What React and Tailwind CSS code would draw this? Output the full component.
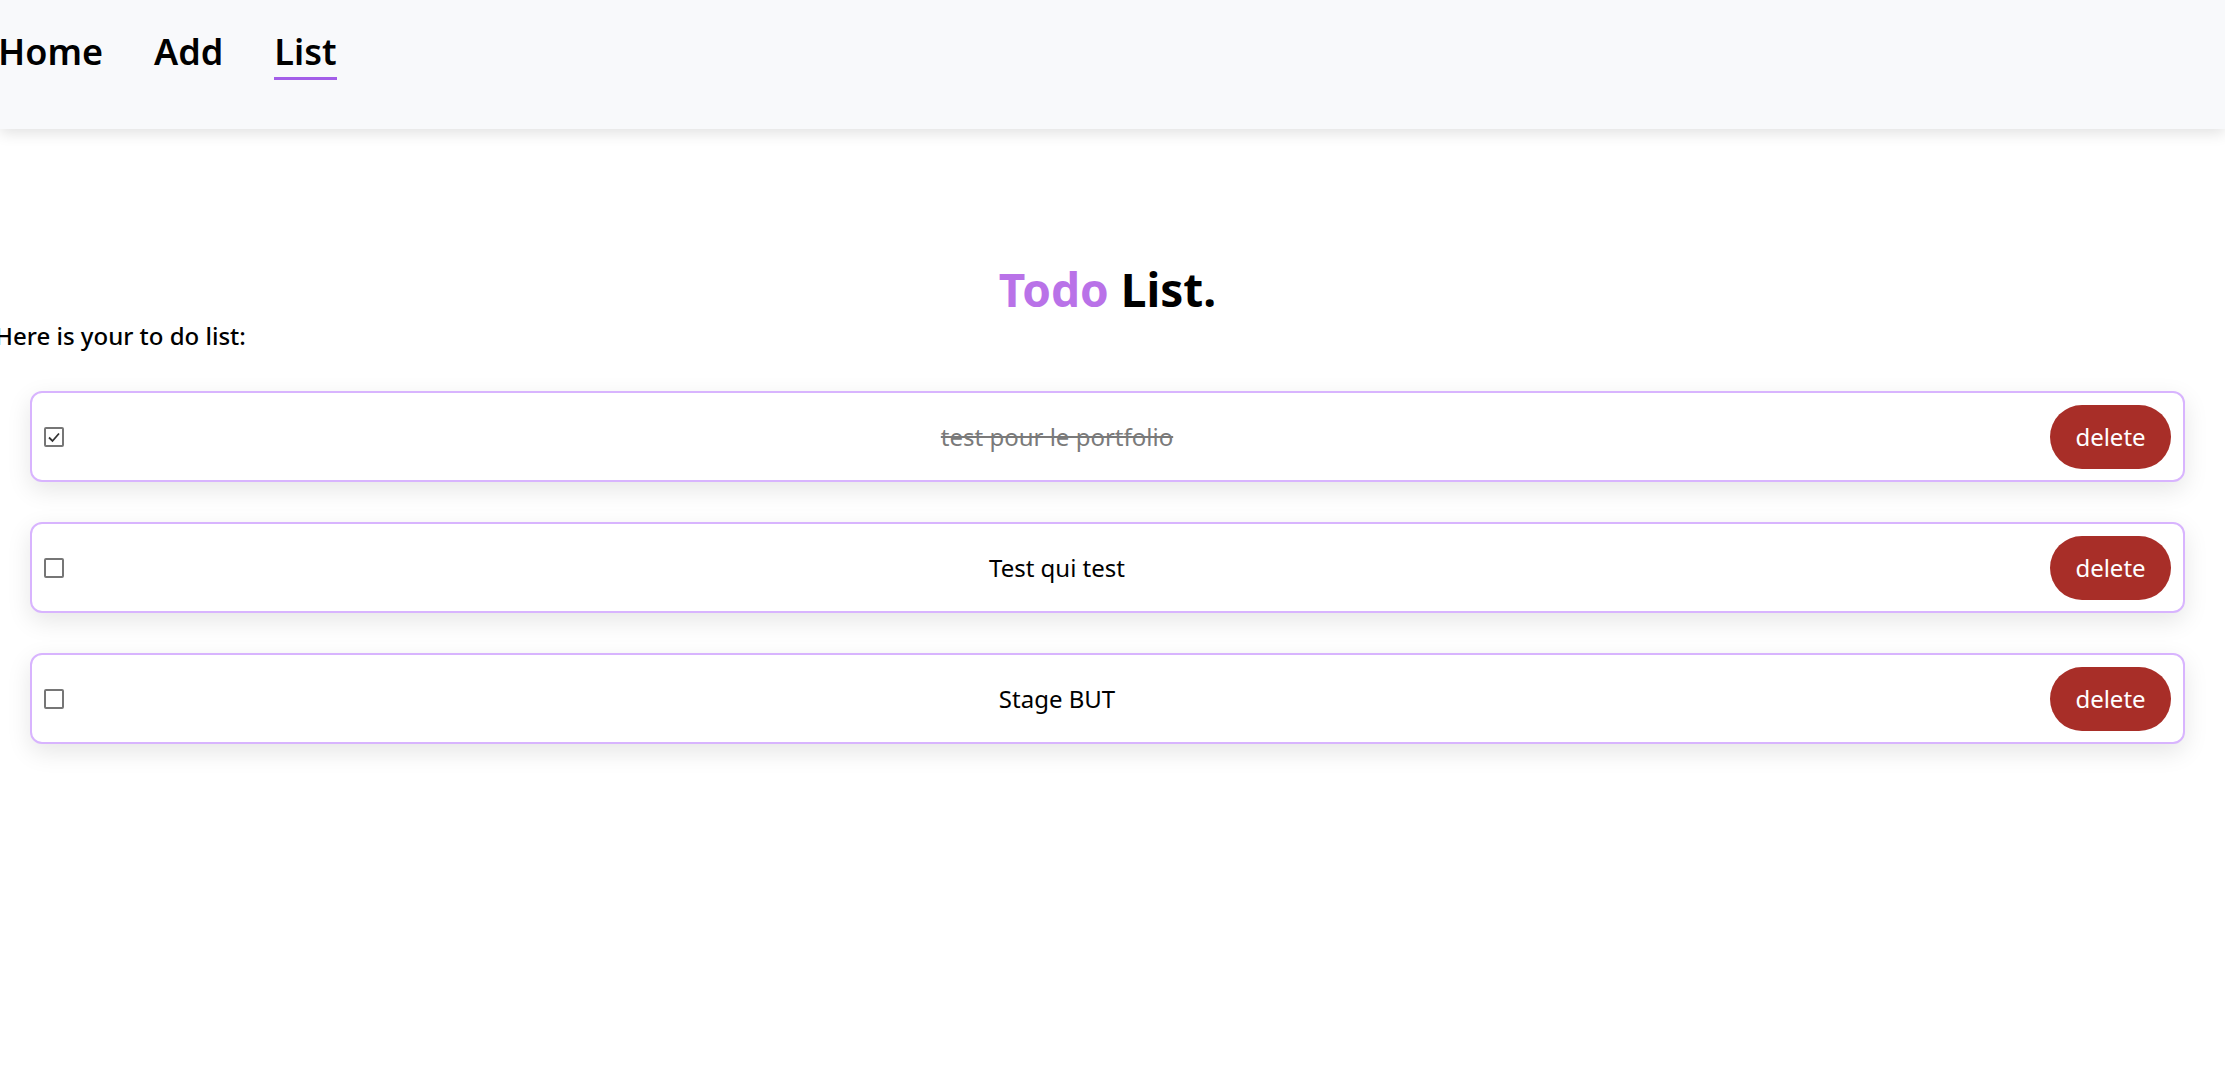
import React from "react";

const todos = [
  { text: "test pour le portfolio", done: true },
  { text: "Test qui test", done: false },
  { text: "Stage BUT", done: false },
];

function Checkbox({ checked }) {
  return (
    <div className="w-[20px] h-[20px] border-[2px] border-[#767676] rounded-[2px] bg-white flex items-center justify-center shrink-0">
      {checked && (
        <svg width="14" height="14" viewBox="0 0 14 14">
          <path d="M2 7.5 L5.5 11 L12 3.5" fill="none" stroke="#333" strokeWidth="1.8" />
        </svg>
      )}
    </div>
  );
}

export default function App() {
  return (
    <div className="min-h-[1066px] bg-white text-black" style={{ fontFamily: '"Noto Sans", "Open Sans", sans-serif' }}>
      <nav className="h-[129px] bg-[#f8f9fb] shadow-[0_4px_14px_rgba(0,0,0,0.12)] relative z-10">
        <div className="flex items-start gap-[51px] pt-[29px] -ml-[2px]">
          <a className="text-[36px] font-semibold leading-[46px] pb-[5px]">Home</a>
          <a className="text-[36px] font-semibold leading-[46px] pb-[5px]">Add</a>
          <a className="text-[36px] font-semibold leading-[46px] pb-[2px] border-b-[3px] border-[#a35ee8]">List</a>
        </div>
      </nav>
      <main className="-ml-[5px] mr-[5px] pt-[130px]">
        <h1 className="text-center text-[46px] font-bold leading-[60px]">
          <span className="text-[#b972e8]">Todo</span> List.
        </h1>
        <p className="text-[24px] font-medium leading-[30px] mt-[2px]">Here is your to do list:</p>
        <div className="mx-[35px] mt-[40px] flex flex-col gap-[40px]">
          {todos.map((t) => (
            <div
              key={t.text}
              className="h-[91px] rounded-[12px] border-[2px] border-[#d8b4fe] bg-white shadow-[0_8px_24px_rgba(0,0,0,0.10)] flex items-center pl-[12px] pr-[12px]"
            >
              <Checkbox checked={t.done} />
              <span
                className={
                  "flex-1 text-center text-[24px] leading-[32px] " +
                  (t.done ? "line-through text-[#7a7a7a]" : "text-black")
                }
              >
                {t.text}
              </span>
              <button className="w-[121px] h-[64px] rounded-full bg-[#a82e28] text-white text-[24px] leading-[32px]">
                delete
              </button>
            </div>
          ))}
        </div>
      </main>
    </div>
  );
}
